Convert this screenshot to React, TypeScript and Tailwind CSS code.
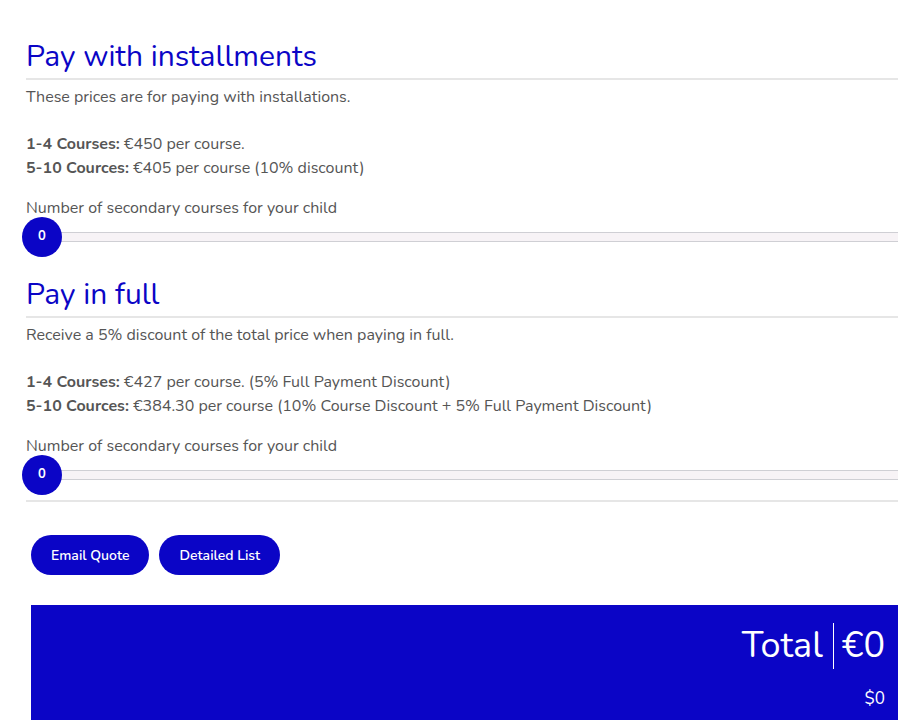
import React from 'react';

type TSection = {
  title: string;
  intro: string;
  lines: { label: string; text: string }[];
};

const sections: TSection[] = [
  {
    title: 'Pay with installments',
    intro: 'These prices are for paying with installations.',
    lines: [
      { label: '1-4 Courses:', text: ' €450 per course.' },
      { label: '5-10 Cources:', text: ' €405 per course (10% discount)' },
    ],
  },
  {
    title: 'Pay in full',
    intro: 'Receive a 5% discount of the total price when paying in full.',
    lines: [
      { label: '1-4 Courses:', text: ' €427 per course. (5% Full Payment Discount)' },
      { label: '5-10 Cources:', text: ' €384.30 per course (10% Course Discount + 5% Full Payment Discount)' },
    ],
  },
];

const Slider = () => (
  <div className="relative h-[40px] mt-[-3px] flex items-center">
    <div className="w-full h-[10px] border-y border-[#cfcfd4] bg-[#f7f3f6]" />
    <div className="absolute left-[-4px] top-0 w-[40px] h-[40px] rounded-full bg-[#0b05c6] flex items-center justify-center text-white text-[13px] font-bold">
      0
    </div>
  </div>
);

const PriceSection = ({ section }: { section: TSection }) => (
  <div>
    <h2 className="text-[30px] leading-[40px] text-[#0b05c6] pb-[1px] border-b-2 border-[#e6e6e6]">
      {section.title}
    </h2>
    <p className="mt-[5px] leading-[24px]">{section.intro}</p>
    <div className="mt-[23px] leading-[24px]">
      {section.lines.map((line) => (
        <div key={line.label}>
          <b className="font-bold">{line.label}</b>
          {line.text}
        </div>
      ))}
    </div>
    <p className="mt-[16px] leading-[24px]">Number of secondary courses for your child</p>
    <Slider />
  </div>
);

export default function App() {
  return (
    <div className="bg-white h-[720px] overflow-hidden pl-[26px] pt-[37px] text-[16px] text-[#555555] font-['Nunito','Noto_Sans',sans-serif]">
      <div className="flex flex-col gap-[18px]">
        <PriceSection section={sections[0]} />
        <div>
          <PriceSection section={sections[1]} />
          <div className="mt-[5px] border-b-2 border-[#e6e6e6]" />
        </div>
      </div>
      <div className="flex gap-[10px] pl-[5px] mt-[33px]">
        <button className="h-[40px] px-[20px] rounded-full bg-[#0b05c6] text-white text-[14px] font-semibold">
          Email Quote
        </button>
        <button className="h-[40px] px-[20px] rounded-full bg-[#0b05c6] text-white text-[14px] font-semibold">
          Detailed List
        </button>
      </div>
      <div className="ml-[5px] mt-[30px] h-[200px] bg-[#0b05c6] text-white pr-[13px] pt-[18px]">
        <div className="flex justify-end items-center">
          <span className="text-[36px] leading-[46px] pr-[10px] border-r border-white">Total</span>
          <span className="text-[36px] leading-[46px] pl-[8px]">€0</span>
        </div>
        <div className="flex justify-end mt-[17px] text-[17px]">$0</div>
      </div>
    </div>
  );
}
